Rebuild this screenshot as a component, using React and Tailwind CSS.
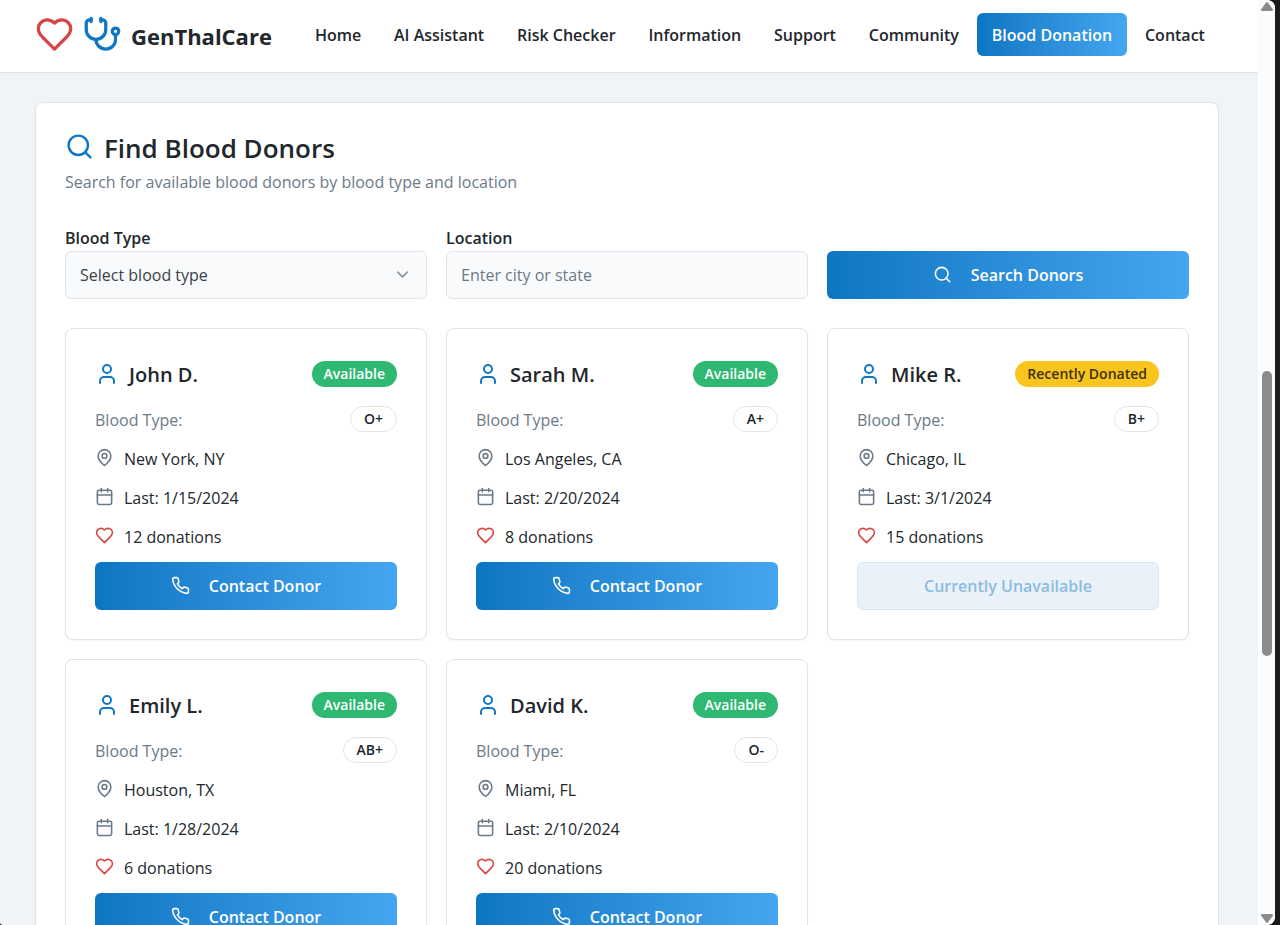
import { useState } from "react";
import { Calendar, ChevronDown, Search, Stethoscope } from "lucide-react";

const navLinks = [
  "Home",
  "AI Assistant",
  "Risk Checker",
  "Information",
  "Support",
  "Community",
  "Blood Donation",
  "Contact",
];

const bloodTypes = ["A+", "A-", "B+", "B-", "AB+", "AB-", "O+", "O-"];

const donors = [
  { name: "John D.", type: "O+", city: "New York, NY", last: "1/15/2024", count: 12, available: true },
  { name: "Sarah M.", type: "A+", city: "Los Angeles, CA", last: "2/20/2024", count: 8, available: true },
  { name: "Mike R.", type: "B+", city: "Chicago, IL", last: "3/1/2024", count: 15, available: false },
  { name: "Emily L.", type: "AB+", city: "Houston, TX", last: "1/28/2024", count: 6, available: true },
  { name: "David K.", type: "O-", city: "Miami, FL", last: "2/10/2024", count: 20, available: true },
];

function Icon({ className, children }) {
  return (
    <svg
      viewBox="0 0 24 24"
      fill="none"
      stroke="currentColor"
      strokeWidth="2"
      strokeLinecap="round"
      strokeLinejoin="round"
      aria-hidden="true"
      className={className}
    >
      {children}
    </svg>
  );
}

function HeartIcon({ className }) {
  return (
    <Icon className={className}>
      <path d="M19 14c1.49-1.46 3-3.21 3-5.5A5.5 5.5 0 0 0 16.5 3c-1.76 0-3 .5-4.5 2-1.5-1.5-2.74-2-4.5-2A5.5 5.5 0 0 0 2 8.5c0 2.3 1.5 4.05 3 5.5l7 7Z" />
    </Icon>
  );
}

function UserIcon({ className }) {
  return (
    <Icon className={className}>
      <path d="M19 21v-2a4 4 0 0 0-4-4H9a4 4 0 0 0-4 4v2" />
      <circle cx="12" cy="7" r="4" />
    </Icon>
  );
}

function PinIcon({ className }) {
  return (
    <Icon className={className}>
      <path d="M20 10c0 6-8 12-8 12s-8-6-8-12a8 8 0 0 1 16 0Z" />
      <circle cx="12" cy="10" r="3" />
    </Icon>
  );
}

function PhoneIcon({ className }) {
  return (
    <Icon className={className}>
      <path d="M22 16.92v3a2 2 0 0 1-2.18 2 19.79 19.79 0 0 1-8.63-3.07 19.5 19.5 0 0 1-6-6 19.79 19.79 0 0 1-3.07-8.67A2 2 0 0 1 4.11 2h3a2 2 0 0 1 2 1.72 12.84 12.84 0 0 0 .7 2.81 2 2 0 0 1-.45 2.11L8.09 9.91a16 16 0 0 0 6 6l1.27-1.27a2 2 0 0 1 2.11-.45 12.84 12.84 0 0 0 2.81.7A2 2 0 0 1 22 16.92z" />
    </Icon>
  );
}

function Header() {
  return (
    <header className="flex h-[73px] shrink-0 items-center border-b border-[#dde3ea] bg-white pl-[35px] pr-[38px]">
      <a href="#home" className="flex items-center gap-[9px] pr-7">
        <HeartIcon className="mb-1 h-[39px] w-[39px] text-[#d84545]" />
        <Stethoscope className="mb-1 h-[39px] w-[39px] text-[#1177c2]" />
        <span className="text-[22px] font-bold">GenThalCare</span>
      </a>
      <nav className="flex flex-1 items-center justify-between pb-[3px]">
        {navLinks.map((label) => (
          <a
            key={label}
            href={"#" + label.toLowerCase().replace(/ /g, "-")}
            className={
              label === "Blood Donation"
                ? "flex h-[43px] items-center whitespace-nowrap rounded-md bg-linear-to-r from-[#0b76c3] to-[#44a6f0] px-[15px] font-semibold text-white"
                : "flex h-[43px] items-center whitespace-nowrap px-[15px] font-semibold"
            }
          >
            {label}
          </a>
        ))}
      </nav>
    </header>
  );
}

function DonorCard({ donor }) {
  return (
    <article className="rounded-lg border border-[#dfe5ec] bg-white p-[29px] shadow-xs">
      <div className="mb-[14px] flex h-[33px] items-center justify-between">
        <h3 className="flex items-center gap-[10px] text-xl font-semibold">
          <UserIcon className="mb-0.5 h-6 w-6 text-[#1177c2]" />
          {donor.name}
        </h3>
        {donor.available ? (
          <span className="mb-0.5 rounded-full bg-[#2eb872] px-3 text-sm/[26px] font-semibold text-white">Available</span>
        ) : (
          <span className="mb-0.5 rounded-full bg-[#fac41f] px-3 text-sm/[26px] font-semibold text-[#3d3210]">Recently Donated</span>
        )}
      </div>

      <div className="space-y-[10px]">
        <div className="flex h-[29px] items-center justify-between">
          <span className="text-[#6b7a89]">Blood Type:</span>
          <span className="mb-0.5 rounded-full border border-[#dfe5ec] px-[13px] text-sm/[24px] font-semibold">{donor.type}</span>
        </div>
        <div className="flex h-[29px] items-center gap-[10px]">
          <PinIcon className="mb-0.5 h-[19px] w-[19px] text-[#6b7a89]" />
          {donor.city}
        </div>
        <div className="flex h-[29px] items-center gap-[10px]">
          <Calendar className="mb-0.5 h-[19px] w-[19px] text-[#6b7a89]" />
          Last: {donor.last}
        </div>
        <div className="flex h-[29px] items-center gap-[10px]">
          <HeartIcon className="mb-0.5 h-[19px] w-[19px] text-[#d84545]" />
          {donor.count} donations
        </div>
      </div>

      {donor.available ? (
        <button
          type="button"
          className="mt-[11px] flex h-12 w-full items-center justify-center gap-[19px] rounded-md bg-linear-to-r from-[#0b76c3] to-[#44a6f0] font-semibold text-white"
        >
          <PhoneIcon className="mb-0.5 h-[19px] w-[19px]" />
          Contact Donor
        </button>
      ) : (
        <button
          type="button"
          disabled
          className="mt-[11px] h-12 w-full rounded-md border border-[#dbe7f1] bg-[#eaf1f8] font-semibold text-[#8bbce1]"
        >
          Currently Unavailable
        </button>
      )}
    </article>
  );
}

function ScrollArrow({ className }) {
  return (
    <svg viewBox="0 0 12 9" className={className} aria-hidden="true">
      <path d="M5 .7a1.3 1.3 0 0 1 2 0l4.7 6.3a1.2 1.2 0 0 1-1 2H1.3a1.2 1.2 0 0 1-1-2Z" />
    </svg>
  );
}

function ScrollTrack() {
  return (
    <div className="flex w-[17px] shrink-0 flex-col items-center bg-[#fcfcfc] py-[2px]">
      <ScrollArrow className="h-[9px] w-3 fill-[#8b8b8b]" />
      <div className="grow-[360]" />
      <div className="w-[10px] grow-[284] rounded-full bg-[#8b8b8b]" />
      <div className="grow-[258]" />
      <ScrollArrow className="h-[9px] w-3 rotate-180 fill-[#8b8b8b]" />
    </div>
  );
}

export default function App() {
  const [bloodType, setBloodType] = useState("");
  const [location, setLocation] = useState("");

  return (
    <div className="h-screen bg-[#1b1b1b] pr-[5px] font-['Open_Sans','Noto_Sans',sans-serif] text-base text-[#22272c]">
      <div className="flex h-full overflow-hidden rounded-r-lg rounded-bl-[3px] bg-[#f0f4f7]">
        <div className="flex min-w-0 flex-1 flex-col overflow-hidden">
          <Header />

          <main className="min-h-0 flex-1 overflow-hidden pb-8 pl-[35px] pr-[39px] pt-[29px]">
            <section className="rounded-lg border border-[#dfe5ec] bg-white p-[29px] shadow-xs">
              <h1 className="flex h-8 items-center gap-[10px] text-[26px] font-semibold">
                <Search className="mb-1 h-[29px] w-[29px] text-[#1177c2]" />
                Find Blood Donors
              </h1>
              <p className="mt-1 leading-[29px] text-[#6b7a89]">
                Search for available blood donors by blood type and location
              </p>

              <form className="mt-[29px] grid grid-cols-3 items-end gap-[19px]" onSubmit={(e) => e.preventDefault()}>
                <div>
                  <label htmlFor="blood-type" className="block h-[25px] font-semibold">Blood Type</label>
                  <div className="relative">
                    <select
                      id="blood-type"
                      value={bloodType}
                      onChange={(e) => setBloodType(e.target.value)}
                      className="block h-12 w-full appearance-none rounded-md border border-[#dfe5ec] bg-[#f8fafc] px-[14px] text-[#3a4249]"
                    >
                      <option value="">Select blood type</option>
                      {bloodTypes.map((type) => (
                        <option key={type} value={type}>{type}</option>
                      ))}
                    </select>
                    <ChevronDown className="pointer-events-none absolute right-[15px] top-[14px] h-[19px] w-[19px] text-[#8d9297]" />
                  </div>
                </div>
                <div>
                  <label htmlFor="location" className="block h-[25px] font-semibold">Location</label>
                  <input
                    id="location"
                    type="text"
                    value={location}
                    onChange={(e) => setLocation(e.target.value)}
                    placeholder="Enter city or state"
                    className="block h-12 w-full rounded-md border border-[#dfe5ec] bg-[#f8fafc] px-[14px] placeholder:text-[#6b7a89]"
                  />
                </div>
                <button
                  type="submit"
                  className="flex h-12 items-center justify-center gap-[19px] rounded-md bg-linear-to-r from-[#0b76c3] to-[#44a6f0] font-semibold text-white"
                >
                  <Search className="mb-0.5 h-[19px] w-[19px]" />
                  Search Donors
                </button>
              </form>

              <div className="mt-[29px] grid grid-cols-3 gap-[19px]">
                {donors.map((donor) => (
                  <DonorCard key={donor.name} donor={donor} />
                ))}
              </div>
            </section>
          </main>
        </div>

        <ScrollTrack />
      </div>
    </div>
  );
}
